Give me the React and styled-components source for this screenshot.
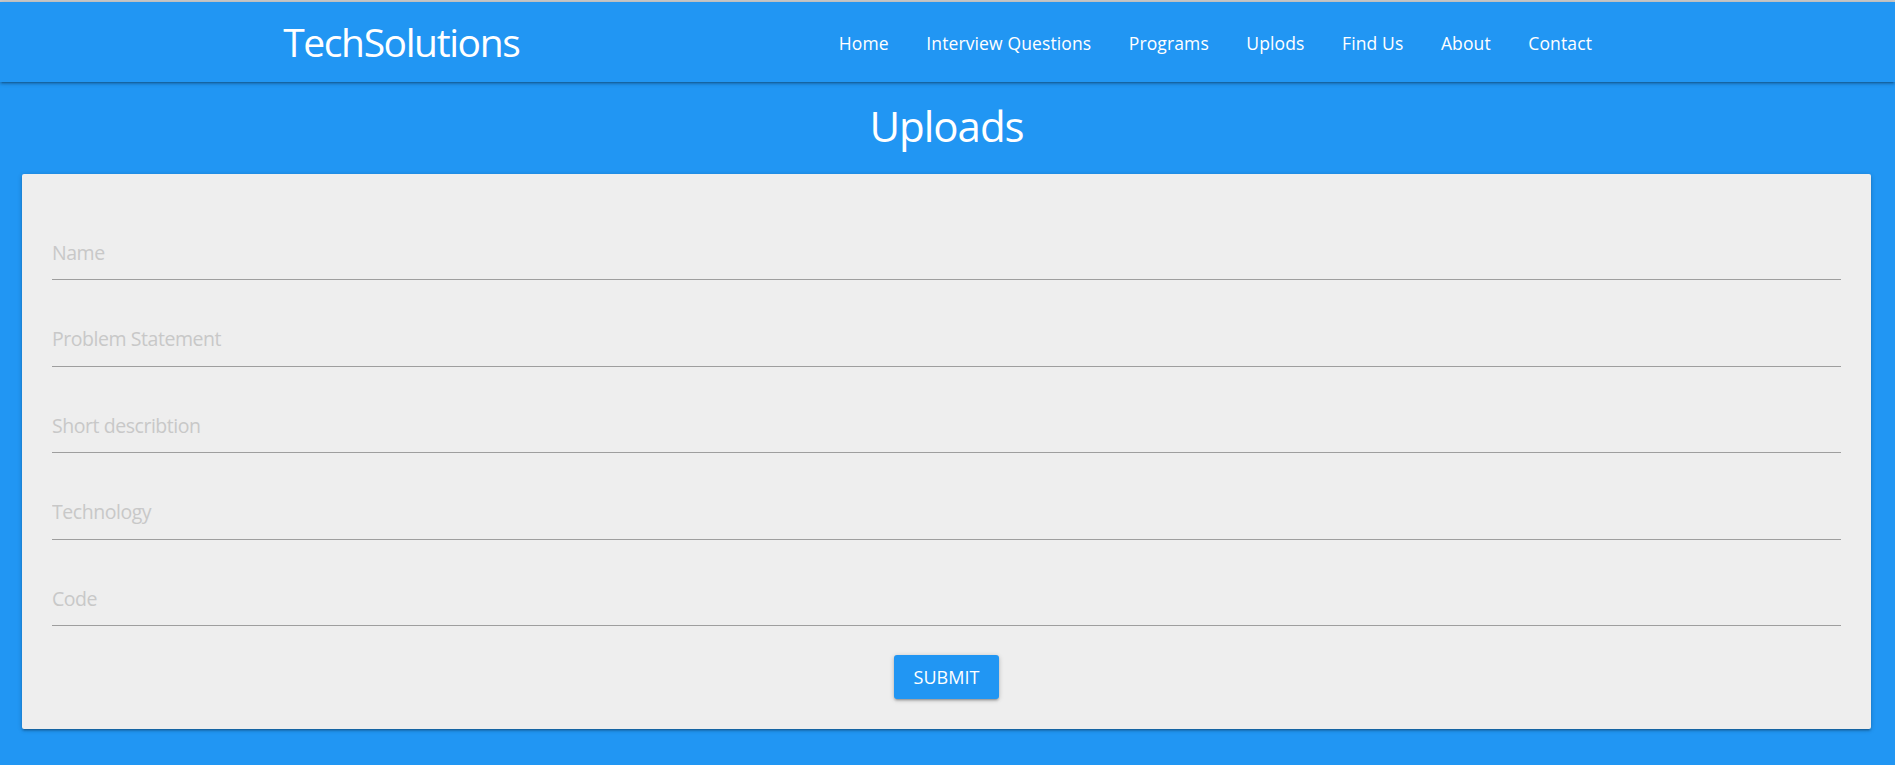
import React from "react";
import styled, { createGlobalStyle } from "styled-components";

const GlobalStyle = createGlobalStyle`
  html, body {
    margin: 0;
    padding: 0;
    background: #2196f3;
    font-family: "Open Sans", "Noto Sans", sans-serif;
  }
  * { box-sizing: border-box; }
`;

const Page = styled.div`
  min-height: 765px;
  background: #2196f3;
  border-top: 2px solid #cbcbcb;
`;

const Nav = styled.nav`
  height: 80px;
  background: #2196f3;
  box-shadow: 0 2px 2px 0 rgba(0, 0, 0, 0.14), 0 3px 1px -2px rgba(0, 0, 0, 0.12),
    0 1px 5px 0 rgba(0, 0, 0, 0.2);
  position: relative;
  z-index: 1;
`;

const NavInner = styled.div`
  width: 70%;
  height: 100%;
  margin: 0 auto;
  display: flex;
  align-items: center;
  justify-content: space-between;
`;

const Brand = styled.a`
  color: #fff;
  font-size: 39px;
  line-height: 80px;
  letter-spacing: -1.4px;
  text-decoration: none;
  margin-left: -1px;
`;

const Menu = styled.ul`
  list-style: none;
  margin: 0;
  padding: 0;
  display: flex;
  height: 100%;
`;

const MenuLink = styled.a`
  display: block;
  padding: 2px 18.75px 0;
  color: #fff;
  font-size: 17.5px;
  line-height: 78px;
  letter-spacing: 0.12px;
  text-decoration: none;
`;

const Main = styled.main`
  padding: 0 24px 0 22px;
`;

const Title = styled.h1`
  margin: 22px 0 27px;
  text-align: center;
  color: #fff;
  font-weight: 400;
  font-size: 42px;
  line-height: 43px;
  letter-spacing: -1px;
`;

const Card = styled.form`
  background: #eeeeee;
  border-radius: 2px;
  padding: 45px 30px 30px;
  display: flex;
  flex-direction: column;
  gap: 25.5px;
  box-shadow: 0 2px 2px 0 rgba(0, 0, 0, 0.14), 0 3px 1px -2px rgba(0, 0, 0, 0.12),
    0 1px 5px 0 rgba(0, 0, 0, 0.2);
`;

const Input = styled.input`
  display: block;
  width: 100%;
  height: 61px;
  padding: 6px 0 0;
  margin: 0;
  border: none;
  border-bottom: 1px solid #9e9e9e;
  background: transparent;
  outline: none;
  font-family: inherit;
  font-size: 19.5px;
  letter-spacing: -0.45px;
  color: #333;
  &::placeholder {
    color: #c8c8c8;
  }
`;

const Actions = styled.div`
  display: flex;
  justify-content: center;
  margin-top: 3.5px;
`;

const Button = styled.button`
  width: 105px;
  height: 44px;
  border: none;
  border-radius: 3px;
  background: #2196f3;
  color: #fff;
  font-family: inherit;
  font-size: 18px;
  line-height: 44px;
  text-transform: uppercase;
  padding: 0;
  cursor: pointer;
  box-shadow: 0 2px 2px 0 rgba(0, 0, 0, 0.14), 0 3px 1px -2px rgba(0, 0, 0, 0.12),
    0 1px 5px 0 rgba(0, 0, 0, 0.2);
`;

const links = ["Home", "Interview Questions", "Programs", "Uplods", "Find Us", "About", "Contact"];
const fields = ["Name", "Problem Statement", "Short describtion", "Technology", "Code"];

export default function App() {
  return (
    <>
      <GlobalStyle />
      <Page>
        <Nav>
          <NavInner>
            <Brand href="#">TechSolutions</Brand>
            <Menu>
              {links.map((l) => (
                <li key={l}>
                  <MenuLink href="#">{l}</MenuLink>
                </li>
              ))}
            </Menu>
          </NavInner>
        </Nav>
        <Main>
          <Title>Uploads</Title>
          <Card onSubmit={(e) => e.preventDefault()}>
            {fields.map((f) => (
              <Input key={f} type="text" placeholder={f} />
            ))}
            <Actions>
              <Button type="submit">Submit</Button>
            </Actions>
          </Card>
        </Main>
      </Page>
    </>
  );
}
